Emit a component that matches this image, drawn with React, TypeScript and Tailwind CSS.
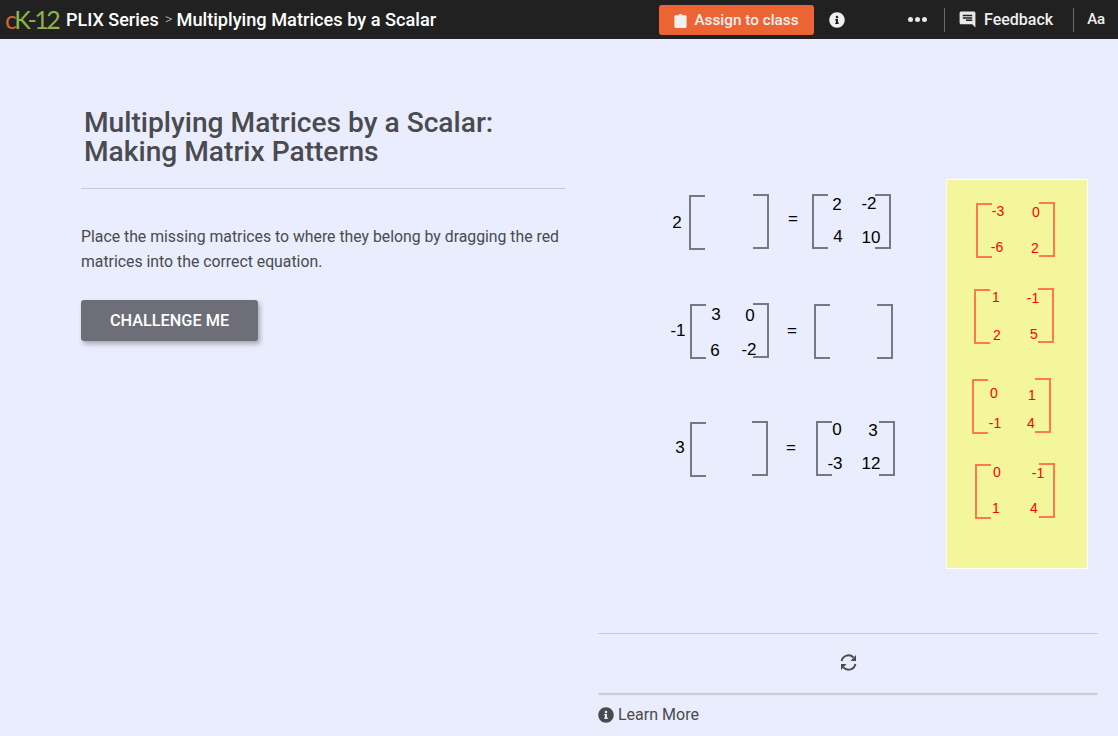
import React from "react";
import { FaInfoCircle } from "react-icons/fa";
import { MdChat } from "react-icons/md";

const ORIGIN_X = 598;
const ORIGIN_Y = 39;

type Num = [string, number, number];
type Mat = { l: [number, number, number]; r: [number, number, number]; nums: Num[] };

function Bracket({ x, y, h, side, red }: { x: number; y: number; h: number; side: "l" | "r"; red?: boolean }) {
  const color = red ? "border-[#ff7850]" : "border-[#777882]";
  const sides = side === "l" ? "border-l-2 border-t-2 border-b-2" : "border-r-2 border-t-2 border-b-2";
  return (
    <div
      className={`absolute w-[16px] ${sides} ${color}`}
      style={{ left: x - ORIGIN_X, top: y - ORIGIN_Y, height: h }}
    />
  );
}

function Label({ t, x, y, red }: { t: string; x: number; y: number; red?: boolean }) {
  return (
    <span
      className={`absolute -translate-x-1/2 -translate-y-1/2 font-['Liberation_Sans',sans-serif] leading-none ${
        red ? "text-[14px] text-[#ff0000]" : "text-[17px] text-black"
      }`}
      style={{ left: x - ORIGIN_X, top: y - ORIGIN_Y }}
    >
      {t}
    </span>
  );
}

function Matrix({ m, red }: { m: Mat; red?: boolean }) {
  return (
    <>
      <Bracket x={m.l[0]} y={m.l[1]} h={m.l[2]} side="l" red={red} />
      <Bracket x={m.r[0]} y={m.r[1]} h={m.r[2]} side="r" red={red} />
      {m.nums.map((n, i) => (
        <Label key={i} t={n[0]} x={n[1]} y={n[2]} red={red} />
      ))}
    </>
  );
}

const black: Mat[] = [
  { l: [689, 195, 55], r: [753, 194, 55], nums: [] },
  { l: [812, 194, 55], r: [875, 194, 55], nums: [["2", 837, 204], ["-2", 869, 203], ["4", 838, 236], ["10", 871, 237]] },
  { l: [690, 304, 55], r: [753, 303, 55], nums: [["3", 716, 314], ["0", 750, 315], ["6", 715, 350], ["-2", 749, 349]] },
  { l: [814, 304, 55], r: [877, 304, 55], nums: [] },
  { l: [690, 422, 55], r: [752, 421, 55], nums: [] },
  { l: [816, 421, 55], r: [879, 421, 55], nums: [["0", 837, 429], ["3", 873, 430], ["-3", 835, 463], ["12", 871, 463]] },
];

const red: Mat[] = [
  { l: [976, 203, 55], r: [1039, 202, 55], nums: [["-3", 998, 211], ["0", 1036, 212], ["-6", 997, 247], ["2", 1035, 248]] },
  { l: [974, 289, 55], r: [1038, 288, 55], nums: [["1", 996, 297], ["-1", 1033, 298], ["2", 997, 335], ["5", 1034, 334]] },
  { l: [972, 379, 55], r: [1035, 378, 55], nums: [["0", 994, 393], ["1", 1032, 395], ["-1", 995, 423], ["4", 1031, 423]] },
  { l: [975, 464, 55], r: [1039, 463, 55], nums: [["0", 997, 472], ["-1", 1038, 473], ["1", 996, 508], ["4", 1034, 508]] },
];

const scalars: Num[] = [
  ["2", 677, 222],
  ["=", 793, 218],
  ["-1", 678, 330],
  ["=", 792, 330],
  ["3", 680, 447],
  ["=", 791, 447],
];

export default function App() {
  return (
    <div className="flex h-[736px] w-[1118px] flex-col overflow-hidden bg-[#e9edfd] font-['Roboto',sans-serif]">
      <header className="flex h-[39px] shrink-0 items-center bg-[#212121] text-white">
        <div className="flex w-[659px] shrink-0 items-center whitespace-nowrap">
          <div className="ml-[5px] flex w-[61px] font-['Lato',sans-serif] text-[25px] font-normal leading-none tracking-[-2.6px]">
            <span className="text-[#d8622c]">c</span>
            <span className="text-[#8db34b]">K-12</span>
          </div>
          <span className="text-[18px] font-medium">PLIX Series</span>
          <span className="ml-[6px] mr-[4px] text-[15px] font-light text-[#cccccc]">&gt;</span>
          <span className="text-[18.2px] font-medium">Multiplying Matrices by a Scalar</span>
        </div>
        <button className="flex h-[30px] w-[155px] shrink-0 items-center justify-center gap-[7px] rounded-[3px] bg-[#ed6434] pt-[1px] text-[15.3px] font-medium text-[#f0f0f0]">
          <svg width="13" height="15" viewBox="0 0 13 16" className="fill-[#f0f0f0]">
            <path d="M4 2.5 L4.6 1.5 H5.5 C5.7 .5 7.3 .5 7.5 1.5 H8.4 L9 2.5 H11.5 C12.3 2.5 13 3.2 13 4 V14.5 C13 15.3 12.3 16 11.5 16 H1.5 C.7 16 0 15.3 0 14.5 V4 C0 3.2 .7 2.5 1.5 2.5 Z" />
          </svg>
          Assign to class
        </button>
        <FaInfoCircle className="ml-[15px] shrink-0 text-[16px] text-[#f0f0f0]" />
        <span className="ml-[63px] flex w-[19px] shrink-0 justify-between">
          <i className="block h-[5px] w-[5px] rounded-full bg-[#e8e8e8]" />
          <i className="block h-[5px] w-[5px] rounded-full bg-[#e8e8e8]" />
          <i className="block h-[5px] w-[5px] rounded-full bg-[#e8e8e8]" />
        </span>
        <div className="ml-[17px] h-[24px] w-px shrink-0 bg-[#6a6a6a]" />
        <MdChat className="ml-[13px] shrink-0 -scale-x-100 text-[19px] text-[#e8e8e8]" />
        <span className="ml-[7px] shrink-0 text-[16px] font-medium text-[#f0f0f0]">Feedback</span>
        <div className="ml-[20px] h-[24px] w-px shrink-0 bg-[#6a6a6a]" />
        <span className="ml-[13px] shrink-0 text-[15px] font-medium text-[#f0f0f0]">Aa</span>
      </header>

      <main className="flex min-h-0 flex-1">
        <section className="w-[598px] shrink-0 pl-[81px]">
          <div className="w-[484px] border-b border-[#c9c9d9] pb-[22px] pl-[3px] pt-[69px]">
            <h1 className="whitespace-nowrap text-[28.15px] font-medium leading-[29px] text-[#4a4a4f]">
              Multiplying Matrices by a Scalar:
              <br />
              Making Matrix Patterns
            </h1>
          </div>
          <p className="mt-[35px] w-[490px] text-[15.8px] leading-[25px] text-[#4a4a4f]">
            Place the missing matrices to where they belong by dragging the red matrices into the correct equation.
          </p>
          <button className="mt-[26px] h-[41px] w-[177px] rounded-[3px] bg-[#6e6e78] pt-[2px] text-[16.3px] font-medium text-white shadow-[2px_3px_5px_rgba(0,0,0,0.3)]">
            CHALLENGE ME
          </button>
        </section>

        <section className="flex w-[500px] shrink-0 flex-col">
          <div className="relative h-[595px] border-b border-[#c9c9d9]">
            {black.map((m, i) => (
              <Matrix key={i} m={m} />
            ))}
            {scalars.map((s, i) => (
              <Label key={i} t={s[0]} x={s[1]} y={s[2]} />
            ))}
            <div className="absolute left-[348px] top-[140px] h-[390px] w-[142px] border border-white bg-[#f4f69c]" />
            {red.map((m, i) => (
              <Matrix key={i} m={m} red />
            ))}
          </div>
          <div className="flex h-[60px] items-center justify-center border-b border-[#c9c9d9] pb-[3px] shadow-[0_2px_1px_-1px_rgba(0,0,0,0.12)]">
            <svg width="17" height="17" viewBox="0 0 17 17" className="fill-[#4a4a4f] stroke-[#4a4a4f]">
              <path d="M1.6 7 A7 7 0 0 1 13.5 3.5" fill="none" strokeWidth="1.9" />
              <path d="M16 1 V7 H10.5 Z" strokeWidth="0" />
              <path d="M15.4 10 A7 7 0 0 1 3.5 13.5" fill="none" strokeWidth="1.9" />
              <path d="M1 16 V10 H6.5 Z" strokeWidth="0" />
            </svg>
          </div>
          <div className="mt-[9px] flex items-center gap-[4px] text-[16px] text-[#4a4a4f]">
            <FaInfoCircle className="text-[16px]" />
            Learn More
          </div>
        </section>
      </main>
    </div>
  );
}
